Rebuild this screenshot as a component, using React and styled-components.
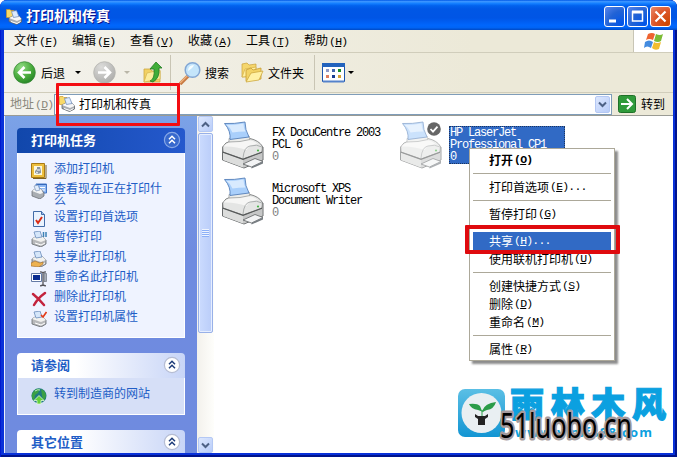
import React from "react";
import styled, { createGlobalStyle, css } from "styled-components";

const Global = createGlobalStyle`
  * { box-sizing: border-box; }
  body {
    margin: 0;
    overflow: hidden;
    background: #fff;
    font: 12px/12px "Noto Sans CJK SC", sans-serif;
    color: #000;
    cursor: default;
  }
  svg { display: block; flex: none; }
`;

const Window = styled.div`
  position: relative;
  width: 677px;
  height: 457px;
  display: flex;
  flex-direction: column;
  padding: 0 4px 4px;
  background: #0831d9;
  border-radius: 7px 7px 0 0;
  box-shadow: inset 1px 0 #0019cf, inset -2px 0 #00138c, inset 0 -2px #00138c;
  overflow: hidden;
`;

const TitleBar = styled.header`
  height: 30px;
  flex: none;
  margin: 0 -4px;
  padding: 3px 6px 0;
  display: flex;
  align-items: center;
  background: linear-gradient(#0058e6 0, #3a93ff 5%, #2a8dff 8%, #127dff 12%, #0262ee 19%, #0057e5 30%, #0055e5 60%, #0066fd 84%, #0064f5 92%, #0049c4 100%);
`;

const Title = styled.h1`
  flex: 1;
  margin: -3px 0 0 4px;
  font-size: 14px;
  line-height: 16px;
  font-weight: 700;
  color: #fff;
  text-shadow: 1px 1px #0f1089;
`;

const Controls = styled.div`
  display: flex;
  gap: 2px;
`;

const ControlButton = styled.span`
  width: 21px;
  height: 21px;
  border: 1px solid #fff;
  border-radius: 3px;
  background: ${(p) =>
    p.$danger
      ? "radial-gradient(circle at 90% 90%, #cc4600, #dc5527 55%, #e98a6c)"
      : "radial-gradient(circle at 90% 90%, #0054e9, #2263d5 55%, #5b86ec)"};
`;

const MenuBar = styled.nav`
  height: 23px;
  flex: none;
  display: flex;
  align-items: center;
  border-bottom: 1px solid #d0cdbb;
  background: linear-gradient(90deg, #f3f2ec, #ece9d8 70%);
`;

const MenuItems = styled.div`
  flex: 1;
  display: grid;
  grid-template-columns: repeat(6, 58px);
  padding-left: 10px;
  margin-top: -1px;
`;

const FlagBox = styled.div`
  width: 40px;
  height: 22px;
  background: #fff;
  border-left: 1px solid #c8c5b5;
  display: grid;
  place-items: center;
`;

const ToolBar = styled.div`
  height: 40px;
  flex: none;
  display: flex;
  align-items: center;
  padding-left: 9px;
  background: linear-gradient(90deg, #f3f2ec, #ece9d8 70%);
  border-bottom: 1px solid #d0cdbb;
`;

const Tool = styled.div`
  display: flex;
  align-items: center;
  width: ${(p) => p.$w}px;
  gap: ${(p) => p.$gap || 6}px;
`;

const Caret = styled.i`
  border: 3px solid transparent;
  border-bottom: 0;
  border-top-color: ${(p) => (p.$muted ? "#b9b6a8" : "#000")};
  margin-left: ${(p) => p.$ml || 0}px;
`;

const Divider = styled.i`
  width: 1px;
  height: 35px;
  background: #c9c5b4;
  margin-right: ${(p) => p.$mr}px;
`;

const AddressBar = styled.div`
  height: 23px;
  flex: none;
  display: flex;
  align-items: center;
  background: linear-gradient(90deg, #f3f2ec, #ece9d8 70%);
  border-bottom: 1px solid #9a9b94;
`;

const AddressLabel = styled.span`
  width: 50px;
  padding-left: 6px;
  white-space: nowrap;
  color: #8a887c;
`;

const AddressField = styled.div`
  width: 558px;
  height: 21px;
  display: flex;
  align-items: center;
  background: #fff;
  border: 1px solid #7f9db9;
  padding: 0 1px 0 4px;
`;

const AddressText = styled.span`
  flex: 1;
  margin-left: 4px;
`;

const ScrollButton = styled.span`
  width: 15px;
  height: ${(p) => p.$h || 17}px;
  flex: none;
  display: grid;
  place-items: center;
  border: 1px solid #b4c8f4;
  border-radius: 2px;
  background: linear-gradient(135deg, #dce7fe, #b9cdf9);
`;

const Go = styled.div`
  display: flex;
  align-items: center;
  gap: 5px;
  margin-left: 6px;
`;

const Body = styled.main`
  flex: 1;
  min-height: 0;
  display: flex;
  background: #fff;
`;

const SideBar = styled.aside`
  width: 193px;
  flex: none;
  padding: 12px 12px 0 12px;
  border-left: 1px solid #e8eefb;
  background: linear-gradient(#7ba2e7, #6f8be0 40%, #6f8bdf);
  overflow: hidden;
  display: flex;
  flex-direction: column;
  gap: 15px;
`;

const Panel = styled.section`
  flex: none;
`;

const PanelHead = styled.h2`
  height: 25px;
  margin: 0;
  padding: 0 4px 2px 14px;
  display: flex;
  align-items: center;
  justify-content: space-between;
  font-size: 13px;
  line-height: 14px;
  font-weight: 700;
  border-radius: 4px 4px 0 0;
  color: ${(p) => (p.$primary ? "#fff" : "#215dc6")};
  background: ${(p) => (p.$primary ? "linear-gradient(90deg, #1147ab, #2559cd)" : "linear-gradient(90deg, #fff 35%, #c8d5f7)")};
`;

const PanelBody = styled.div`
  height: ${(p) => p.$h}px;
  padding: ${(p) => p.$top}px 12px 0 13px;
  border: 1px solid #fff;
  border-top: 0;
  background: ${(p) => (p.$primary ? "#eff3ff" : "#d6dff7")};
  display: flex;
  flex-direction: column;
  gap: 4px;
`;

const TaskRow = styled.div`
  display: grid;
  grid-template-columns: 16px 112px;
  column-gap: 7px;
  height: ${(p) => (p.$double ? 24 : 16)}px;
  color: #215dc6;
`;

const TaskLabel = styled.span`
  margin-top: -1px;
`;

const ScrollBar = styled.div`
  width: 17px;
  flex: none;
  display: flex;
  flex-direction: column;
  align-items: center;
  justify-content: space-between;
  background: linear-gradient(90deg, #f3f1ec, #fefefb);
`;

const Thumb = styled.div`
  width: 15px;
  height: 200px;
  margin: 1px 0 auto;
  border: 1px solid #98b0e8;
  border-radius: 2px;
  box-shadow: inset 0 0 0 1px #e6eeff;
  background: linear-gradient(90deg, #cbdbfe, #bacdf9);
  display: flex;
  align-items: center;
  justify-content: center;
`;

const Grip = styled.i`
  width: 7px;
  height: 8px;
  background: repeating-linear-gradient(#eef4fe 0 1px, #8cb0f8 1px 2px);
`;

const FileArea = styled.div`
  flex: 1;
  display: grid;
  grid-template-columns: 178px 178px;
  grid-auto-rows: 56px;
  align-content: start;
  padding: 5px 0 0 8px;
`;

const Printer = styled.div`
  display: flex;
  gap: 6px;
`;

const monoText = css`
  font-family: "Liberation Mono", "Noto Sans CJK SC", monospace;
  font-size: 12px;
  letter-spacing: -1.2px;
  line-height: 12px;
`;

const PrinterText = styled.div`
  ${monoText}
  width: 116px;
  height: 38px;
  margin-top: 5px;
  padding: 1px;
  white-space: pre;
  color: ${(p) => (p.$selected ? "#fff" : "#000")};
  background: ${(p) => (p.$selected ? "#316ac5" : "transparent")};
  outline: ${(p) => (p.$selected ? "1px dotted #1b3560" : "none")};
  outline-offset: -1px;
`;

const Count = styled.div`
  color: ${(p) => (p.$selected ? "#fff" : "#808080")};
`;

const KeyHint = styled.span`
  ${monoText}
  letter-spacing: -0.8px;
  font-size: 11.5px;
  margin-left: 1px;
  u { text-underline-offset: 1px; }
`;

const ContextMenu = styled.div`
  position: absolute;
  left: 469px;
  top: 148px;
  width: 146px;
  height: 213px;
  padding: 2px 3px;
  background: #fff;
  border: 1px solid #aca899;
  box-shadow: 3px 3px 2px rgba(0, 0, 0, 0.45);
`;

const MenuEntry = styled.div`
  height: 18px;
  padding: 0 0 0 16px;
  display: flex;
  align-items: center;
  white-space: nowrap;
  font-weight: ${(p) => (p.$bold ? 700 : 400)};
  color: ${(p) => (p.$active ? "#fff" : "#000")};
  background: ${(p) => (p.$active ? "#316ac5" : "transparent")};
`;

const MenuLine = styled.div`
  height: 1px;
  margin: 4px 0;
  background: #aca899;
`;

const RedFrame = styled.div`
  position: absolute;
  left: ${(p) => p.$x}px;
  top: ${(p) => p.$y}px;
  width: ${(p) => p.$w}px;
  height: ${(p) => p.$h}px;
  border: ${(p) => p.$b}px solid ${(p) => p.$color};
  border-radius: 1px;
`;

const Watermark = styled.svg`
  position: absolute;
  left: 455px;
  top: 370px;
`;

const Key = ({ k, dots }) => (
  <KeyHint>(<u>{k}</u>){dots && "..."}</KeyHint>
);

const PrinterIcon = ({ faded }) => (
  <svg width="43" height="48" viewBox="0 -1 43 48" opacity={faded ? 0.6 : 1}>
    <path d="M.5 25v13L22 46l19-8V25L24 17z" fill="#d6d7d6" stroke="#6a6d6e" />
    <path d="M1 30l20 7v8.500L1 38z" fill="#dcdddc" />
    <path d="M21 37l19-7v8l-19 7.500z" fill="#c6c7c7" />
    <path d="M.7 25Q3 20 9 19l19-2.500q9 2 12.500 8L40 30l-19 7L1 30z" fill="#e4e5e4" stroke="#7a7d7d" strokeWidth=".9" />
    <path d="M1.500 24.500q3-4 8-4.500l17-2q6 1 9 4-8 1-11 6-11-4-23-3.500z" fill="#f6f6f5" />
    <path d="M21 36q1-11 7-12 7-2 12 1" fill="none" stroke="#a5a8a8" strokeWidth=".9" />
    <path d="M7 20v-3.500l20-2.500 1 3.500-10 2z" fill="#ebecea" stroke="#919494" strokeWidth=".7" />
    <path d="M2.500 1.500Q12 2 23 0q0 8 4 15L8 17.500Q9 9 2.500 1.500z" fill="#a9cffb" stroke="#557fb9" strokeWidth=".9" />
    <path d="M4.500 3q8 0 17-1.500 0 4 2 8-7 0-13 1-2-5-6-7.500z" fill="#d8eafe" />
    <path d="M1 30.300l20 7 19-7" fill="none" stroke="#555858" strokeWidth="1.100" />
    <path d="M21 42l12-5.500 8 3L29.500 45z" fill="#f3f4f5" stroke="#606365" strokeWidth=".8" />
    <path d="M29.500 45v1.500l11.500-5V39.500z" fill="#777d82" />
    <circle cx="36" cy="28.500" r="1.100" fill="#48b548" />
  </svg>
);

const MiniPrinter = ({ children }) => (
  <svg width="16" height="16" viewBox="0 0 16 16">
    <path d="M1 8l3-2h8l3 3v4l-5 3-9-3z" fill="#b7b8ba" stroke="#66696e" strokeWidth=".8" />
    <path d="M1 8l9 3 5-2-3-3H4z" fill="#f1f1ef" />
    <path d="M3 1l6-1 2 6-6 1z" fill="#d5e6fa" stroke="#6a8cba" strokeWidth=".8" />
    <path d="M4 12l6 2 4-2" fill="none" stroke="#fff" />
    {children}
  </svg>
);

const FoldersPrinterIcon = () => (
  <svg width="16" height="16" viewBox="0 0 16 16">
    <path d="M.5.500h3.500l1 1h3v7H.5z" fill="#f8d968" stroke="#c8972a" strokeWidth=".7" />
    <path d="M3 9l4-2h6l2.500 3v3l-5 2.500-7.500-3z" fill="#aaadb2" stroke="#5c6066" strokeWidth=".8" />
    <path d="M3 9l8 3 4.500-2L13 7H7z" fill="#f7f7f7" />
    <path d="M5.500 2.500l5-1L13 7.500l-5.500 1z" fill="#dceafe" stroke="#6b86b2" strokeWidth=".7" />
    <path d="M5 12.500l6 2 3.500-2" fill="none" stroke="#fff" />
  </svg>
);

const TaskIcon = ({ kind }) => {
  if (kind === "add")
    return (
      <svg width="16" height="16" viewBox="0 0 16 16">
        <path d="M.5.5h13v14H.5z" fill="#edbf3e" stroke="#a87916" />
        <path d="M15 2v13.5H2" stroke="#7d6223" fill="none" />
        <path d="M3 3h8v9H3z" fill="#fcf8df" />
        <path d="M4 8l2-2V4h3l1 4v2l-3 1-3-1z" fill="#8c969e" />
        <path d="M6 7h3M5 9l2 1" stroke="#fff" />
      </svg>
    );
  if (kind === "queue")
    return (
      <svg width="16" height="16" viewBox="0 0 16 16">
        <path d="M5 1h10.500v9H6z" fill="#8fb8f4" stroke="#4476c5" />
        <path d="M6 1.500h9" stroke="#3468bb" />
        <path d="M9 4.500h5M10 7h4" stroke="#fff" />
        <path d="M1 8l3-2h6l3 4v3l-4 3-8-3z" fill="#a9adb2" stroke="#61666c" strokeWidth=".7" />
        <path d="M1 8l8 3 3-1-2-4H4z" fill="#f3f4f5" />
        <path d="M3 3l4-1 2 5-4 1z" fill="#e2edfc" stroke="#7188ad" strokeWidth=".6" />
      </svg>
    );
  if (kind === "prefs")
    return (
      <svg width="16" height="16" viewBox="0 0 16 16">
        <path d="M2.500.5h8l3 3v12h-11z" fill="#eaf3ff" stroke="#436ca8" />
        <path d="M10.500.5v3h3" fill="#9fc0ed" stroke="#436ca8" />
        <path d="M5 9l2 3 4-6" fill="none" stroke="#db2d16" strokeWidth="2" />
      </svg>
    );
  if (kind === "rename")
    return (
      <svg width="16" height="16" viewBox="0 0 16 16">
        <path d="M.5 2.500h10v8H.5z" fill="#fff" stroke="#647aa6" />
        <path d="M2 4h7v5H2z" fill="#082b91" />
        <path d="M9 .8q2 0 3 1v12q-1 1-3 1M15 .8q-2 0-3 1v12q1 1 3 1" fill="none" stroke="#55545a" strokeWidth="1.300" />
        <path d="M13 2.500h2.500v8H13z" fill="#a8aeb8" stroke="#5e6570" strokeWidth=".6" />
      </svg>
    );
  if (kind === "delete")
    return (
      <svg width="16" height="16" viewBox="0 0 16 16">
        <path d="M2 3q5 4 11 11M14 2Q7 7 3 14" fill="none" stroke="#c3233d" strokeWidth="2.500" strokeLinecap="round" />
      </svg>
    );
  if (kind === "web")
    return (
      <svg width="16" height="17" viewBox="0 0 16 17">
        <circle cx="8" cy="7.800" r="7.500" fill="#1f7a80" />
        <path d="M1 6q3-6 8-5l-2 4-3 2-1 6Q0 10 1 6zM10 1q5 2 5 7-1 4-3 5l-1-6z" fill="#3aa044" />
        <path d="M4 3q3-2 5-1" stroke="#bdeccb" fill="none" />
        <path d="M8 7.500l5 5h-3V16H6v-3.500H3z" fill="#63d139" stroke="#e3f8da" strokeWidth=".8" />
      </svg>
    );
  return (
    <MiniPrinter>
      {kind === "pause" && <path d="M12.500 1v5M15 1v5" stroke="#3d81b5" strokeWidth="1.500" />}
      {kind === "share" && <path d="M0 12l4-2 5 2 3-1v2l-4 3-8-1z" fill="#edb251" stroke="#9b682d" strokeWidth=".6" />}
      {kind === "props" && <path d="M10 4l2 2 3.500-5" fill="none" stroke="#e33c19" strokeWidth="1.700" />}
    </MiniPrinter>
  );
};

const ArrowDisc = ({ muted }) => (
  <svg width="23" height="23" viewBox="0 0 23 23">
    <defs>
      <radialGradient id={muted ? "discGrey" : "discGreen"} cx=".35" cy=".25" r=".8">
        <stop offset="0" stopColor={muted ? "#dcdcda" : "#8fdb82"} />
        <stop offset=".6" stopColor={muted ? "#c0c0be" : "#4aab3c"} />
        <stop offset="1" stopColor={muted ? "#adadab" : "#258526"} />
      </radialGradient>
    </defs>
    <circle cx="11.500" cy="11.500" r="10.800" fill={`url(#${muted ? "discGrey" : "discGreen"})`} stroke={muted ? "#b5b5b0" : "#3b8a38"} strokeWidth=".8" />
    <path d={muted ? "M5 11.500h12M11.500 6l5.500 5.500-5.500 5.500" : "M18 11.500H6M11.500 6L6 11.500l5.500 5.500"} fill="none" stroke="#fff" strokeWidth="2.600" />
  </svg>
);

const FolderUpIcon = () => (
  <svg width="20" height="24" viewBox="0 0 20 24">
    <path d="M1 8h6l2 2h8v11H1z" fill="#f2d163" stroke="#cda843" strokeWidth=".8" />
    <path d="M1 21l3-9 13-3v9z" fill="#fcec9c" stroke="#d8b954" strokeWidth=".8" />
    <path d="M7 20q5-2 4-12H7l6-7 6 6h-3q1 10-6 14z" fill="#40ad38" stroke="#237c24" strokeWidth=".8" />
  </svg>
);

const SearchIcon = () => (
  <svg width="22" height="24" viewBox="0 0 22 24">
    <path d="M1 23l8-8" stroke="#c77b45" strokeWidth="3.500" />
    <path d="M1 22l8-8" stroke="#efb27c" strokeWidth="1.200" />
    <circle cx="13.500" cy="9" r="7.300" fill="#c4e5fb" stroke="#83a7d4" strokeWidth="1.500" />
    <path d="M9 10q0-6 6-6-1 3-6 6z" fill="#f5fcff" />
  </svg>
);

const FoldersIcon = () => (
  <svg width="23" height="21" viewBox="0 0 23 21">
    <path d="M1 15V2l5-1 2 2 7-1v12z" fill="#f5d66c" stroke="#caa03a" strokeWidth=".7" />
    <path d="M1 15l3-8 11-2-1 9z" fill="#fff0a0" stroke="#d3ae49" strokeWidth=".7" />
    <path d="M5 19V8l5-2 2 2 8-2v11z" fill="#f2d365" stroke="#c89c32" strokeWidth=".8" />
    <path d="M5 20l5-9 12-2-4 9z" fill="#fff1a5" stroke="#ceaa41" strokeWidth=".8" />
  </svg>
);

const ViewIcon = () => (
  <svg width="23" height="20" viewBox="0 0 23 20">
    <path d="M.5.5h22v18H.5z" fill="#fff" stroke="#1d55ad" />
    <path d="M0 0h23v4H0z" fill="#2363bd" />
    <path d="M1 18.500h21" stroke="#5482cb" strokeWidth="2" />
    <path d="M4 6h3v3H4z" fill="#919ac7" /><path d="M10 6h3v3h-3z" fill="#4165ac" /><path d="M16 6h3v3h-3z" fill="#188c29" />
    <path d="M4 12h3v3H4z" fill="#df7e60" /><path d="M10 12h3v3h-3z" fill="#173a8f" /><path d="M16 12h3v3h-3z" fill="#d7a335" />
  </svg>
);

const FlagIcon = () => (
  <svg width="20" height="19" viewBox="0 0 20 19">
    <path d="M4 2q4-2 7 0L9 8Q5 6 2 8z" fill="#ee6431" />
    <path d="M12 2q4 2 7 0l-2 7q-3 2-7 0z" fill="#7cbc36" />
    <path d="M1 10q4-3 8 0l-2 6q-4-3-7 0z" fill="#438be0" />
    <path d="M10 10q3 2 7 0l-2 7q-4 2-7-1z" fill="#f3bd2d" />
  </svg>
);

const Chevron = ({ up }) => (
  <svg width="9" height="7" viewBox="0 0 9 7">
    <path d={up ? "M1 5.500L4.500 2 8 5.500" : "M1 1.500L4.500 5 8 1.500"} fill="none" stroke="#4d6185" strokeWidth="2" />
  </svg>
);

const CollapseIcon = ({ primary }) => (
  <svg width="18" height="18" viewBox="0 0 18 18">
    <circle cx="9" cy="9" r="7.600" fill={primary ? "#3869cd" : "#fff"} stroke={primary ? "#88a8e6" : "#b6bdd3"} strokeWidth="1.200" />
    <path d="M6 8.300l3-3 3 3M6 12.300l3-3 3 3" fill="none" stroke={primary ? "#fff" : "#1f3d7a"} strokeWidth="1.500" />
  </svg>
);

const CheckBadge = styled.svg`
  position: absolute;
  left: 427px;
  top: 122px;
`;

const menus = [["文件", "F"], ["编辑", "E"], ["查看", "V"], ["收藏", "A"], ["工具", "T"], ["帮助", "H"]];

const tasks = [
  ["add", "添加打印机"],
  ["queue", "查看现在正在打印什么"],
  ["prefs", "设置打印首选项"],
  ["pause", "暂停打印"],
  ["share", "共享此打印机"],
  ["rename", "重命名此打印机"],
  ["delete", "删除此打印机"],
  ["props", "设置打印机属性"],
];

const entries = [
  { text: "打开", k: "O", bold: true },
  null,
  { text: "打印首选项", k: "E", dots: true },
  null,
  { text: "暂停打印", k: "G" },
  null,
  { text: "共享", k: "H", dots: true, active: true },
  { text: "使用联机打印机", k: "U" },
  null,
  { text: "创建快捷方式", k: "S" },
  { text: "删除", k: "D" },
  { text: "重命名", k: "M" },
  null,
  { text: "属性", k: "R" },
];

const printers = [
  { name: "FX DocuCentre 2003\nPCL 6" },
  { name: "HP LaserJet\nProfessional CP1", selected: true },
  { name: "Microsoft XPS\nDocument Writer" },
];

export default function App() {
  return (
    <Window>
      <Global />
      <TitleBar>
        <FoldersPrinterIcon />
        <Title>打印机和传真</Title>
        <Controls>
          <ControlButton>
            <svg width="19" height="19"><path d="M4 14h7" stroke="#fff" strokeWidth="3" /></svg>
          </ControlButton>
          <ControlButton>
            <svg width="19" height="19"><path d="M4.500 5h10v9h-10zM4 5h11" fill="none" stroke="#fff" strokeWidth="1.500" /><path d="M4 5h11" stroke="#fff" strokeWidth="3" /></svg>
          </ControlButton>
          <ControlButton $danger>
            <svg width="19" height="19"><path d="M4.500 4.500l10 10m0-10l-10 10" stroke="#fff" strokeWidth="2.200" /></svg>
          </ControlButton>
        </Controls>
      </TitleBar>
      <MenuBar>
        <MenuItems>
          {menus.map(([text, k]) => <span key={k}>{text}<Key k={k} /></span>)}
        </MenuItems>
        <FlagBox><FlagIcon /></FlagBox>
      </MenuBar>
      <ToolBar>
        <Tool $w={80} $gap={5}><ArrowDisc />后退<Caret $ml={5} /></Tool>
        <Tool $w={50} $gap={8}><ArrowDisc muted /><Caret $muted /></Tool>
        <Tool $w={27}><FolderUpIcon /></Tool>
        <Divider $mr={8} />
        <Tool $w={62} $gap={4}><SearchIcon />搜索</Tool>
        <Tool $w={73} $gap={4}><FoldersIcon />文件夹</Tool>
        <Divider $mr={7} />
        <Tool $w={40} $gap={3}><ViewIcon /><Caret /></Tool>
      </ToolBar>
      <AddressBar>
        <AddressLabel>地址<Key k="D" /></AddressLabel>
        <AddressField>
          <FoldersPrinterIcon />
          <AddressText>打印机和传真</AddressText>
          <ScrollButton><Chevron /></ScrollButton>
        </AddressField>
        <Go>
          <svg width="18" height="18" viewBox="0 0 18 18">
            <rect x=".5" y=".5" width="17" height="17" rx="2" fill="#2f9a3a" stroke="#1f7028" />
            <path d="M3 9h11M9 4l5 5-5 5" fill="none" stroke="#fff" strokeWidth="2" />
          </svg>
          转到
        </Go>
      </AddressBar>
      <Body>
        <SideBar>
          <Panel>
            <PanelHead $primary>打印机任务<CollapseIcon primary /></PanelHead>
            <PanelBody $primary $h={185} $top={10}>
              {tasks.map(([kind, text]) => (
                <TaskRow key={kind} $double={kind === "queue"}><TaskIcon kind={kind} /><TaskLabel>{text}</TaskLabel></TaskRow>
              ))}
            </PanelBody>
          </Panel>
          <Panel>
            <PanelHead>请参阅<CollapseIcon /></PanelHead>
            <PanelBody $h={37} $top={10}>
              <TaskRow><TaskIcon kind="web" /><TaskLabel>转到制造商的网站</TaskLabel></TaskRow>
            </PanelBody>
          </Panel>
          <Panel>
            <PanelHead>其它位置<CollapseIcon /></PanelHead>
          </Panel>
        </SideBar>
        <ScrollBar>
          <ScrollButton $h={16}><Chevron up /></ScrollButton>
          <Thumb><Grip /></Thumb>
          <ScrollButton $h={16}><Chevron /></ScrollButton>
        </ScrollBar>
        <FileArea>
          {printers.map(({ name, selected }) => (
            <Printer key={name}>
              <PrinterIcon faded={selected} />
              <PrinterText $selected={selected}>{name}<Count $selected={selected}>0</Count></PrinterText>
            </Printer>
          ))}
        </FileArea>
      </Body>
      <CheckBadge width="14" height="14" viewBox="0 0 14 14">
        <circle cx="7" cy="7" r="6.800" fill="#666" />
        <path d="M3.500 7l2.500 2.600 4.500-5" fill="none" stroke="#fff" strokeWidth="1.800" />
      </CheckBadge>
      <ContextMenu>
        {entries.map((e, i) =>
          e ? (
            <MenuEntry key={i} $bold={e.bold} $active={e.active}>{e.text}<Key k={e.k} dots={e.dots} /></MenuEntry>
          ) : (
            <MenuLine key={i} />
          )
        )}
      </ContextMenu>
      <RedFrame $x={56} $y={83} $w={124} $h={43} $b={3} $color="#f30d12" />
      <RedFrame $x={465} $y={225} $w={155} $h={29} $b={4} $color="#df0a0e" />
      <Watermark width="214" height="83" viewBox="455 370 214 83">
        <defs>
          <linearGradient id="tile" x2="0" y2="1"><stop stopColor="#5bbfe5" /><stop offset="1" stopColor="#1295d3" /></linearGradient>
        </defs>
        <rect x="458" y="389" width="47" height="48" rx="7" fill="url(#tile)" />
        <circle cx="481.500" cy="413" r="20" fill="#e9eff2" />
        <path d="M469 404q8-1 11 2l2 5q3-8 14-9-2 7-9 8-3 1-4 2-2-1-5-2-7-1-9-6z" fill="#2b9c48" />
        <path d="M482 410v6" stroke="#2b9c48" />
        <path d="M475 414l3 2h7l3-2v3l-3 2v6h-7v-6l-3-2z" fill="#222" />
        <text x="510" y="417" textLength="156" fontFamily="Noto Sans CJK SC" fontWeight="900" fontSize="34" fill="#0ba0e0" stroke="#0ba0e0" strokeWidth="1.200">雨林木风</text>
        <text x="515" y="437" textLength="137" fontFamily="Open Sans, sans-serif" fontWeight="700" fontSize="13" fill="#0ba0e0">www.ylmf888.com</text>
        <text x="500" y="438" textLength="132" lengthAdjust="spacingAndGlyphs" fontFamily="Noto Sans, sans-serif" fontSize="35" fill="#000" stroke="#a59b9d" strokeWidth="5" strokeLinejoin="round" paintOrder="stroke">51luobo.cn</text>
      </Watermark>
    </Window>
  );
}
